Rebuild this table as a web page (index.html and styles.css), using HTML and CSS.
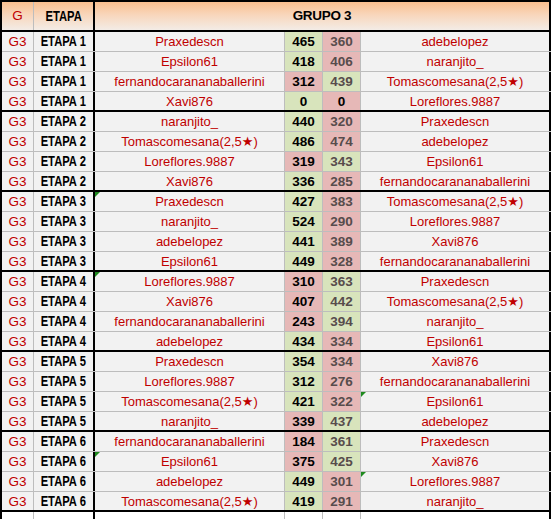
FILE: index.html
```html
<!DOCTYPE html>
<html lang="es">
<head>
<meta charset="utf-8">
<title>Grupo 3</title>
<link rel="stylesheet" href="styles.css">
</head>
<body>
<div class="sheet">
  <div class="row head">
    <div class="c g red">G</div>
    <div class="c etapa"><span class="sq">ETAPA</span></div>
    <div class="c grupo">GRUPO 3</div>
  </div>

  <div class="row"><div class="c g">G3</div><div class="c etapa"><span class="sq">ETAPA 1</span></div><div class="c p1">Praxedescn</div><div class="c s1 win">465</div><div class="c s2 lose">360</div><div class="c p2">adebelopez</div></div>
  <div class="row"><div class="c g">G3</div><div class="c etapa"><span class="sq">ETAPA 1</span></div><div class="c p1">Epsilon61</div><div class="c s1 win">418</div><div class="c s2 lose">406</div><div class="c p2">naranjito_</div></div>
  <div class="row"><div class="c g">G3</div><div class="c etapa"><span class="sq">ETAPA 1</span></div><div class="c p1">fernandocarananaballerini</div><div class="c s1 lose">312</div><div class="c s2 win">439</div><div class="c p2">Tomascomesana(2,5★)</div></div>
  <div class="row end"><div class="c g">G3</div><div class="c etapa"><span class="sq">ETAPA 1</span></div><div class="c p1">Xavi876</div><div class="c s1 win">0</div><div class="c s2 lose dark">0</div><div class="c p2">Loreflores.9887</div></div>

  <div class="row"><div class="c g">G3</div><div class="c etapa"><span class="sq">ETAPA 2</span></div><div class="c p1">naranjito_</div><div class="c s1 win">440</div><div class="c s2 lose">320</div><div class="c p2">Praxedescn</div></div>
  <div class="row"><div class="c g">G3</div><div class="c etapa"><span class="sq">ETAPA 2</span></div><div class="c p1">Tomascomesana(2,5★)</div><div class="c s1 win">486</div><div class="c s2 lose">474</div><div class="c p2">adebelopez</div></div>
  <div class="row"><div class="c g">G3</div><div class="c etapa"><span class="sq">ETAPA 2</span></div><div class="c p1">Loreflores.9887</div><div class="c s1 lose">319</div><div class="c s2 win">343</div><div class="c p2">Epsilon61</div></div>
  <div class="row end"><div class="c g">G3</div><div class="c etapa"><span class="sq">ETAPA 2</span></div><div class="c p1">Xavi876</div><div class="c s1 win">336</div><div class="c s2 lose">285</div><div class="c p2">fernandocarananaballerini</div></div>

  <div class="row"><div class="c g">G3</div><div class="c etapa"><span class="sq">ETAPA 3</span></div><div class="c p1 flag">Praxedescn</div><div class="c s1 win">427</div><div class="c s2 lose">383</div><div class="c p2">Tomascomesana(2,5★)</div></div>
  <div class="row"><div class="c g">G3</div><div class="c etapa"><span class="sq">ETAPA 3</span></div><div class="c p1">naranjito_</div><div class="c s1 win">524</div><div class="c s2 lose">290</div><div class="c p2">Loreflores.9887</div></div>
  <div class="row"><div class="c g">G3</div><div class="c etapa"><span class="sq">ETAPA 3</span></div><div class="c p1">adebelopez</div><div class="c s1 win">441</div><div class="c s2 lose">389</div><div class="c p2">Xavi876</div></div>
  <div class="row end"><div class="c g">G3</div><div class="c etapa"><span class="sq">ETAPA 3</span></div><div class="c p1">Epsilon61</div><div class="c s1 win">449</div><div class="c s2 lose">328</div><div class="c p2">fernandocarananaballerini</div></div>

  <div class="row"><div class="c g">G3</div><div class="c etapa"><span class="sq">ETAPA 4</span></div><div class="c p1 flag">Loreflores.9887</div><div class="c s1 lose">310</div><div class="c s2 win">363</div><div class="c p2">Praxedescn</div></div>
  <div class="row"><div class="c g">G3</div><div class="c etapa"><span class="sq">ETAPA 4</span></div><div class="c p1">Xavi876</div><div class="c s1 lose">407</div><div class="c s2 win">442</div><div class="c p2">Tomascomesana(2,5★)</div></div>
  <div class="row"><div class="c g">G3</div><div class="c etapa"><span class="sq">ETAPA 4</span></div><div class="c p1">fernandocarananaballerini</div><div class="c s1 lose">243</div><div class="c s2 win">394</div><div class="c p2">naranjito_</div></div>
  <div class="row end"><div class="c g">G3</div><div class="c etapa"><span class="sq">ETAPA 4</span></div><div class="c p1">adebelopez</div><div class="c s1 win">434</div><div class="c s2 lose">334</div><div class="c p2">Epsilon61</div></div>

  <div class="row"><div class="c g">G3</div><div class="c etapa"><span class="sq">ETAPA 5</span></div><div class="c p1">Praxedescn</div><div class="c s1 win">354</div><div class="c s2 lose">334</div><div class="c p2">Xavi876</div></div>
  <div class="row"><div class="c g">G3</div><div class="c etapa"><span class="sq">ETAPA 5</span></div><div class="c p1">Loreflores.9887</div><div class="c s1 win">312</div><div class="c s2 lose">276</div><div class="c p2">fernandocarananaballerini</div></div>
  <div class="row"><div class="c g">G3</div><div class="c etapa"><span class="sq">ETAPA 5</span></div><div class="c p1">Tomascomesana(2,5★)</div><div class="c s1 win">421</div><div class="c s2 lose">322</div><div class="c p2 flag">Epsilon61</div></div>
  <div class="row end"><div class="c g">G3</div><div class="c etapa"><span class="sq">ETAPA 5</span></div><div class="c p1">naranjito_</div><div class="c s1 lose">339</div><div class="c s2 win">437</div><div class="c p2">adebelopez</div></div>

  <div class="row"><div class="c g">G3</div><div class="c etapa"><span class="sq">ETAPA 6</span></div><div class="c p1">fernandocarananaballerini</div><div class="c s1 lose">184</div><div class="c s2 win">361</div><div class="c p2">Praxedescn</div></div>
  <div class="row"><div class="c g">G3</div><div class="c etapa"><span class="sq">ETAPA 6</span></div><div class="c p1 flag">Epsilon61</div><div class="c s1 lose">375</div><div class="c s2 win">425</div><div class="c p2">Xavi876</div></div>
  <div class="row"><div class="c g">G3</div><div class="c etapa"><span class="sq">ETAPA 6</span></div><div class="c p1">adebelopez</div><div class="c s1 win">449</div><div class="c s2 lose">301</div><div class="c p2 flag">Loreflores.9887</div></div>
  <div class="row end"><div class="c g">G3</div><div class="c etapa"><span class="sq">ETAPA 6</span></div><div class="c p1">Tomascomesana(2,5★)</div><div class="c s1 win">419</div><div class="c s2 lose">291</div><div class="c p2">naranjito_</div></div>

  <div class="row tail"><div class="c g"></div><div class="c etapa"></div><div class="c p1"></div><div class="c s1"></div><div class="c s2"></div><div class="c p2"></div></div>
</div>
</body>
</html>
```

FILE: styles.css
```css
html, body {
  margin: 0;
  padding: 0;
  background: #ffffff;
}

body {
  font-family: "Liberation Sans", Arial, "DejaVu Sans", sans-serif;
  font-size: 13px;
  color: #c00000;
}

.sheet {
  width: 549px;
  border-left: 2px solid #000;
  border-top: 2px solid #000;
}

.row {
  display: grid;
  grid-template-columns: 32px 61px 190px 38px 38px 190px;
  height: 20px;
  box-sizing: border-box;
  border-bottom: 1px solid #bdbdbd;
  background: #f2f2f2;
}

.row.end {
  border-bottom: 2px solid #000;
}

.row.head {
  height: 30px;
  border-bottom: 2px solid #000;
  background: linear-gradient(to bottom, #fabf8f 0%, #f8d6bb 45%, #f3ece6 100%);
}

.row.tail {
  height: 9px;
  border-bottom: none;
  background: #ffffff;
}

.c {
  position: relative;
  box-sizing: border-box;
  border-right: 1px solid #bdbdbd;
  text-align: center;
  line-height: 19px;
  white-space: nowrap;
  overflow: hidden;
}

.head .c {
  line-height: 28px;
}

.g {
  color: #c00000;
  font-size: 13.5px;
}

.etapa {
  border-right: 2px solid #000;
  color: #000;
  font-weight: bold;
  font-size: 14px;
}

.sq {
  display: inline-block;
  transform: scaleX(0.8);
}

.grupo {
  grid-column: 3 / 7;
  border-right: 2px solid #000;
  color: #000;
  font-weight: bold;
  font-size: 13.5px;
  letter-spacing: -0.3px;
}

.p2 {
  border-right: 2px solid #000;
}

.s1, .s2 {
  font-weight: bold;
  font-size: 13.5px;
}

.s1 {
  color: #000;
}

.s2 {
  color: #574c4c;
}

.s2.dark {
  color: #000;
}

.win {
  background: #d8e4bc;
}

.lose {
  background: #e6b8b7;
}

.flag::before {
  content: "";
  position: absolute;
  top: 0;
  left: 0;
  width: 0;
  height: 0;
  border-top: 5px solid #1f8a1f;
  border-right: 5px solid transparent;
}
```
